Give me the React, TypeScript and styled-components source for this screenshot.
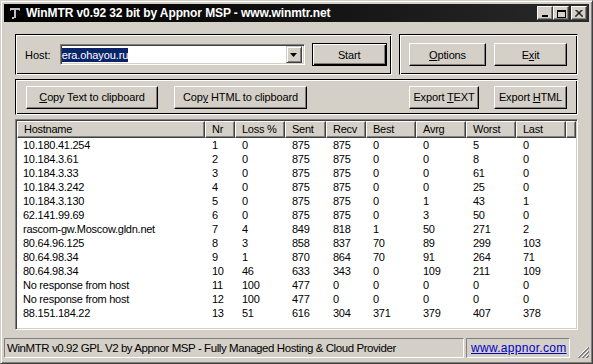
import React from "react";
import styled, { createGlobalStyle } from "styled-components";

const GlobalStyle = createGlobalStyle`
	html, body {
		margin: 0;
		padding: 0;
		background: #d4d0c8;
	}
	body {
		font-family: "Liberation Sans", Arial, sans-serif;
		font-size: 11px;
		color: #000;
	}
`;

const Window = styled.div`
	box-sizing: border-box;
	width: 593px;
	height: 364px;
	padding: 3px;
	background: #d4d0c8;
	border: 1px solid;
	border-color: #d4d0c8 #404040 #404040 #d4d0c8;
	box-shadow: inset 1px 1px #fff, inset -1px -1px #808080;
	display: flex;
	flex-direction: column;
`;

const TitleBar = styled.div`
	height: 18px;
	flex: 0 0 18px;
	display: flex;
	align-items: center;
	background: linear-gradient(to right, #000 0%, #111 50%, #2a2a2a 100%);
	color: #fff;
	font-weight: bold;
	font-size: 12px;
	padding-left: 4px;
	padding-right: 2px;
`;

const TitleText = styled.span`
	margin-left: 4px;
	flex: 1;
	white-space: nowrap;
	letter-spacing: -0.1px;
`;

const TitleButton = styled.div<{ $gap?: number }>`
	box-sizing: border-box;
	width: 16px;
	height: 14px;
	margin-left: ${(p) => p.$gap ?? 0}px;
	background: #d4d0c8;
	border: 1px solid;
	border-color: #fff #404040 #404040 #fff;
	box-shadow: inset -1px -1px #808080;
	display: flex;
	align-items: center;
	justify-content: center;
`;

const Body = styled.div`
	flex: 1;
	display: flex;
	flex-direction: column;
	gap: 4px;
	padding: 12px 11px 6px;
	min-height: 0;
	letter-spacing: -0.25px;
`;

const Row = styled.div`
	display: flex;
	gap: 7px;
`;

const Group = styled.div<{ $w: number; $h: number }>`
	box-sizing: border-box;
	width: ${(p) => p.$w}px;
	height: ${(p) => p.$h}px;
	flex: 0 0 auto;
	border: 1px solid;
	border-color: #000 #fff #fff #000;
	box-shadow: inset 1px 1px #fff, inset -1px -1px #000;
	display: flex;
	align-items: center;
	padding-left: 9px;
`;

const Label = styled.span`
	font-size: 11px;
	margin-right: 9px;
	letter-spacing: 0;
`;

const Combo = styled.div`
	box-sizing: border-box;
	width: 245px;
	height: 21px;
	background: #fff;
	border: 1px solid;
	border-color: #808080 #fff #fff #808080;
	box-shadow: inset 1px 1px #404040, inset -1px -1px #d4d0c8;
	padding: 2px 2px 2px 1px;
	display: flex;
	align-items: center;
`;

const ComboText = styled.div`
	flex: 1;
	font-size: 11px;
	letter-spacing: -0.1px;
`;

const Selected = styled.span`
	background: #0a246a;
	color: #fff;
	padding: 1px 0;
`;

const DropButton = styled.div`
	box-sizing: border-box;
	width: 16px;
	height: 17px;
	background: #d4d0c8;
	border: 1px solid;
	border-color: #d4d0c8 #404040 #404040 #d4d0c8;
	box-shadow: inset 1px 1px #fff, inset -1px -1px #808080;
	display: flex;
	align-items: center;
	justify-content: center;
`;

const Button = styled.button<{ $w: number; $def?: boolean; $ml?: number }>`
	box-sizing: border-box;
	width: ${(p) => p.$w}px;
	height: 23px;
	margin: 0;
	margin-left: ${(p) => p.$ml ?? 0}px;
	padding: 0;
	font-family: "Liberation Sans", Arial, sans-serif;
	font-size: 11px;
	letter-spacing: -0.15px;
	color: #000;
	background: #d4d0c8;
	border: 1px solid;
	border-color: ${(p) => (p.$def ? "#000" : "#fff #000 #000 #fff")};
	box-shadow: ${(p) =>
		p.$def
			? "inset 1px 1px #fff, inset -1px -1px #000, inset -2px -2px #808080"
			: "inset -1px -1px #808080"};
	white-space: nowrap;
	u {
		text-decoration: underline;
		text-underline-offset: 1px;
	}
`;

const ListView = styled.div`
	box-sizing: border-box;
	flex: 1;
	background: #fff;
	border: 1px solid;
	border-color: #808080 #fff #fff #808080;
	box-shadow: inset 1px 1px #404040, inset -1px -1px #d4d0c8;
	padding: 1px;
	display: flex;
	flex-direction: column;
	overflow: hidden;
`;

const HeaderRow = styled.div`
	display: flex;
	height: 17px;
	flex: 0 0 17px;
	background: #d4d0c8;
`;

const HeaderCell = styled.div<{ $w?: number }>`
	box-sizing: border-box;
	${(p) => (p.$w ? `width: ${p.$w}px;` : "flex: 1;")}
	flex-shrink: 0;
	height: 17px;
	line-height: 15px;
	padding-left: 6px;
	border: 1px solid;
	border-color: #fff #404040 #404040 #fff;
	box-shadow: inset -1px -1px #808080;
	white-space: nowrap;
	overflow: hidden;
`;

const DataRow = styled.div`
	display: flex;
	flex: 0 0 14px;
	height: 14px;
	line-height: 14px;
	&:first-of-type {
		margin-top: 1px;
	}
`;

const Cell = styled.div<{ $w: number; $pl?: number }>`
	box-sizing: border-box;
	width: ${(p) => p.$w}px;
	flex-shrink: 0;
	padding-left: ${(p) => p.$pl ?? 7}px;
	white-space: nowrap;
	overflow: hidden;
`;

const StatusBar = styled.div`
	height: 24px;
	flex: 0 0 24px;
	display: flex;
	align-items: flex-end;
	padding-bottom: 2px;
	box-sizing: border-box;
	font-size: 12px;
`;

const Panel = styled.div<{ $w: number; $ml?: number; $tight?: boolean }>`
	box-sizing: border-box;
	width: ${(p) => p.$w}px;
	margin-left: ${(p) => p.$ml ?? 0}px;
	height: 20px;
	line-height: 18px;
	border: 1px solid;
	border-color: #808080 #fff #fff #808080;
	padding-left: 2px;
	white-space: nowrap;
	overflow: hidden;
	font-size: ${(p) => (p.$tight ? 11.5 : 12)}px;
	letter-spacing: ${(p) => (p.$tight ? -0.42 : 0)}px;
`;

const Link = styled.span`
	color: #0000c0;
	text-decoration: underline;
	padding-left: 2px;
	letter-spacing: 0.3px;
`;

const Grip = styled.div`
	width: 17px;
	height: 20px;
	margin-left: 2px;
	display: flex;
	align-items: flex-end;
	justify-content: flex-end;
`;

const cols = [188, 30, 50, 41, 40, 50, 50, 50, 50];
const heads = ["Hostname", "Nr", "Loss %", "Sent", "Recv", "Best", "Avrg", "Worst", "Last"];

const hops: (string | number)[][] = [
	["10.180.41.254", 1, 0, 875, 875, 0, 0, 5, 0],
	["10.184.3.61", 2, 0, 875, 875, 0, 0, 8, 0],
	["10.184.3.33", 3, 0, 875, 875, 0, 0, 61, 0],
	["10.184.3.242", 4, 0, 875, 875, 0, 0, 25, 0],
	["10.184.3.130", 5, 0, 875, 875, 0, 1, 43, 1],
	["62.141.99.69", 6, 0, 875, 875, 0, 3, 50, 0],
	["rascom-gw.Moscow.gldn.net", 7, 4, 849, 818, 1, 50, 271, 2],
	["80.64.96.125", 8, 3, 858, 837, 70, 89, 299, 103],
	["80.64.98.34", 9, 1, 870, 864, 70, 91, 264, 71],
	["80.64.98.34", 10, 46, 633, 343, 0, 109, 211, 109],
	["No response from host", 11, 100, 477, 0, 0, 0, 0, 0],
	["No response from host", 12, 100, 477, 0, 0, 0, 0, 0],
	["88.151.184.22", 13, 51, 616, 304, 371, 379, 407, 378],
];

const AppIcon = () => (
	<svg width="14" height="14" viewBox="0 0 14 14">
		<rect x="2" y="2" width="10" height="2" fill="#c0c0c0" />
		<rect x="6" y="4" width="2" height="8" fill="#c0c0c0" />
		<rect x="4" y="11" width="2" height="2" fill="#c0c0c0" />
		<rect x="2" y="4" width="1" height="1" fill="#808080" />
		<rect x="11" y="4" width="1" height="1" fill="#808080" />
	</svg>
);

const App = () => (
	<>
		<GlobalStyle />
		<Window>
			<TitleBar>
				<AppIcon />
				<TitleText>WinMTR v0.92 32 bit by Appnor MSP - www.winmtr.net</TitleText>
				<TitleButton>
					<svg width="8" height="7" viewBox="0 0 8 7">
						<rect x="1" y="5" width="6" height="2" fill="#000" />
					</svg>
				</TitleButton>
				<TitleButton>
					<svg width="9" height="9" viewBox="0 0 9 9">
						<rect x="0.5" y="1.5" width="8" height="7" fill="none" stroke="#000" />
						<rect x="0" y="1" width="9" height="2" fill="#000" />
					</svg>
				</TitleButton>
				<TitleButton $gap={2}>
					<svg width="8" height="7" viewBox="0 0 8 7">
						<path d="M0.5 0 L7.5 7 M1.5 0 L8 6.5 M7.5 0 L0.5 7 M6.5 0 L0 6.5" stroke="#000" strokeWidth="1" />
					</svg>
				</TitleButton>
			</TitleBar>
			<Body>
				<Row>
					<Group $w={377} $h={41}>
						<Label>Host:</Label>
						<Combo>
							<ComboText>
								<Selected>era.ohayou.ru</Selected>
							</ComboText>
							<DropButton>
								<svg width="7" height="4" viewBox="0 0 7 4">
									<path d="M0 0 H7 L3.5 4 Z" fill="#000" />
								</svg>
							</DropButton>
						</Combo>
						<Button $w={75} $def $ml={7}>
							Start
						</Button>
					</Group>
					<Group $w={179} $h={41}>
						<Button $w={77}>
							<u>O</u>ptions
						</Button>
						<Button $w={73} $ml={8}>
							E<u>x</u>it
						</Button>
					</Group>
				</Row>
				<Group $w={563} $h={36}>
					<Button $w={132} $ml={1}>
						<u>C</u>opy Text to clipboard
					</Button>
					<Button $w={133} $ml={16}>
						Cop<u>y</u> HTML to clipboard
					</Button>
					<Button $w={70} $ml={102}>
						Export <u>T</u>EXT
					</Button>
					<Button $w={73} $ml={15}>
						Export <u>H</u>TML
					</Button>
				</Group>
				<ListView>
					<HeaderRow>
						{heads.map((h, i) => (
							<HeaderCell key={h} $w={cols[i]}>
								{h}
							</HeaderCell>
						))}
						<HeaderCell />
					</HeaderRow>
					{hops.map((hop, r) => (
						<DataRow key={r}>
							{hop.map((v, i) => (
								<Cell key={i} $w={cols[i]} $pl={i === 0 ? 6 : 7}>
									{v}
								</Cell>
							))}
						</DataRow>
					))}
				</ListView>
			</Body>
			<StatusBar>
				<Panel $w={460} $tight>
					WinMTR v0.92 GPL V2 by Appnor MSP - Fully Managed Hosting &amp; Cloud Provider
				</Panel>
				<Panel $w={104} $ml={2}>
					<Link>www.appnor.com</Link>
				</Panel>
				<Grip>
					<svg width="12" height="12" viewBox="0 0 12 12">
						<path d="M11 1 L1 11 M11 5 L5 11 M11 9 L9 11" stroke="#fff" strokeWidth="1" />
						<path d="M12 1 L1 12 M12 2 L2 12 M12 5 L5 12 M12 6 L6 12 M12 9 L9 12 M12 10 L10 12" stroke="#808080" strokeWidth="1" />
					</svg>
				</Grip>
			</StatusBar>
		</Window>
	</>
);

export default App;
